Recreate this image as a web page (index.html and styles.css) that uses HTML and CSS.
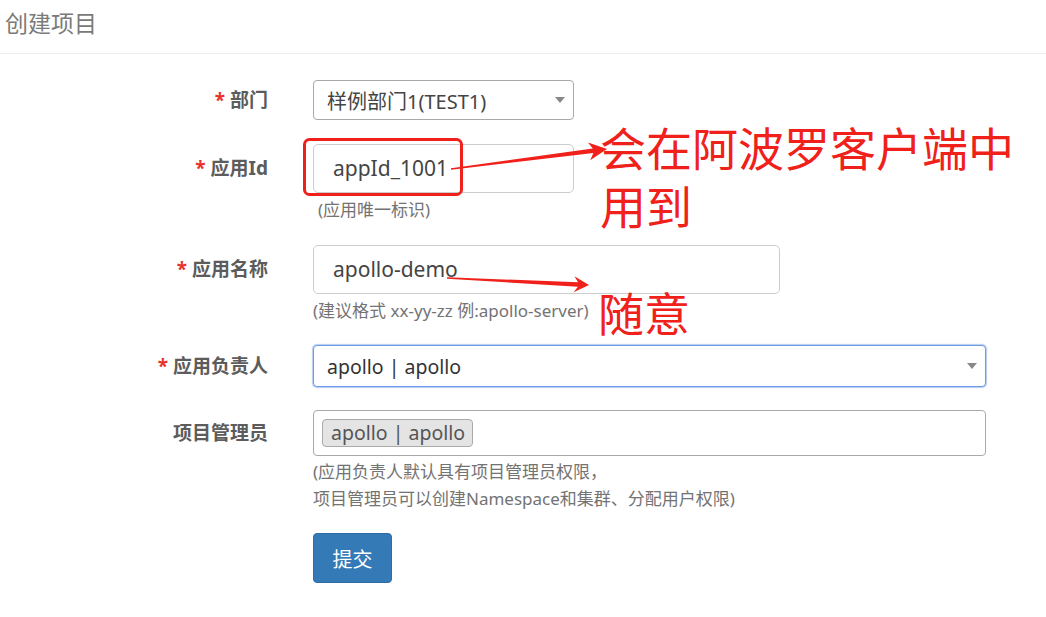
FILE: index.html
```html
<!DOCTYPE html>
<html lang="zh">
<head>
<meta charset="utf-8">
<title>创建项目</title>
<link rel="stylesheet" href="styles.css">
</head>
<body>
<div class="page">
  <div class="header"><h1 class="title">创建项目</h1></div>
  <form class="form">
    <div class="group g-dept">
      <label class="label"><span class="req">*</span>&nbsp;部门</label>
      <div class="ctrl">
        <div class="select w-short"><span class="sel-text">样例部门1(TEST1)</span><i class="caret"></i></div>
      </div>
    </div>
    <div class="group g-id">
      <label class="label"><span class="req">*</span>&nbsp;应用Id</label>
      <div class="ctrl">
        <div class="input w-short">appId_1001</div>
        <p class="help help-indent">(应用唯一标识)</p>
      </div>
    </div>
    <div class="group g-name">
      <label class="label"><span class="req">*</span>&nbsp;应用名称</label>
      <div class="ctrl">
        <div class="input w-mid">apollo-demo</div>
        <p class="help">(建议格式 xx-yy-zz 例:apollo-server)</p>
      </div>
    </div>
    <div class="group g-owner">
      <label class="label"><span class="req">*</span>&nbsp;应用负责人</label>
      <div class="ctrl">
        <div class="select select-focus w-long"><span class="sel-text owner-text">apollo | apollo</span><i class="caret"></i></div>
      </div>
    </div>
    <div class="group g-admin">
      <label class="label">项目管理员</label>
      <div class="ctrl">
        <div class="multi w-long"><span class="tag">apollo | apollo</span></div>
        <p class="help help-two">(应用负责人默认具有项目管理员权限，<br>项目管理员可以创建Namespace和集群、分配用户权限)</p>
      </div>
    </div>
    <div class="group g-submit">
      <div class="label-space"></div>
      <div class="ctrl">
        <button type="button" class="btn">提交</button>
      </div>
    </div>
  </form>

  <div class="note note-1">会在阿波罗客户端中用到</div>
  <div class="note note-2">随意</div>

  <svg class="overlay" width="1046" height="617" viewBox="0 0 1046 617" xmlns="http://www.w3.org/2000/svg">
    <rect x="304.5" y="139.5" width="157" height="55" rx="5" ry="5" fill="none" stroke="#f0201a" stroke-width="3"/>
    <polygon fill="#f0201a" points="450.9,168.2 592.8,148.6 588.0,142.4 607,149 590.2,160.2 593.4,153.0 451.1,169.8"/>
    <polygon fill="#f0201a" points="447.0,277.2 578.1,282.3 574.4,276.3 589,285 573.6,292.3 577.9,286.7 447.0,278.8"/>
  </svg>
</div>
</body>
</html>
```

FILE: styles.css
```css
* { box-sizing: border-box; }

html, body {
  margin: 0;
  padding: 0;
  background: #fff;
}

body {
  font-family: "Noto Sans", "Noto Sans CJK SC", sans-serif;
  color: #555;
}

.page {
  position: relative;
  width: 1046px;
  height: 617px;
  overflow: hidden;
}

.header {
  height: 54px;
  border-bottom: 1px solid #eeeeee;
}

.title {
  margin: 0;
  padding: 8px 0 0 5px;
  font-size: 23px;
  line-height: 30px;
  font-weight: 400;
  color: #7a7a7a;
}

.form {
  padding-top: 26px;
}

.group {
  display: flex;
  align-items: flex-start;
  --h: 40px;
}

.g-dept { --h: 40px; margin-bottom: 24px; }
.g-id { --h: 49px; margin-bottom: 24px; }
.g-name { --h: 49px; margin-bottom: 23px; }
.g-owner { --h: 42px; margin-bottom: 23px; }
.g-admin { --h: 46px; margin-bottom: 21px; }
.g-submit { --h: 50px; }

.label,
.label-space {
  width: 268px;
  flex: none;
  height: var(--h);
  line-height: var(--h);
  text-align: right;
  font-size: 19px;
  font-weight: 700;
  color: #5c5c5c;
}

.req {
  color: #e8322c;
}

.ctrl {
  margin-left: 45px;
}

.w-short { width: 261px; }
.w-mid { width: 467px; }
.w-long { width: 673px; }

.select {
  position: relative;
  height: var(--h);
  border: 1px solid #aaaaaa;
  border-radius: 4px;
  background: #fff;
  padding-left: 13px;
  display: flex;
  align-items: center;
}

.sel-text {
  font-size: 20px;
  color: #444;
}

.owner-text {
  font-size: 19.5px;
  color: #333;
}

.select-focus {
  border-color: #6f9ce6;
  box-shadow: 0 0 1px 1px rgba(120, 160, 230, 0.55);
}

.caret {
  position: absolute;
  right: 8px;
  top: 50%;
  margin-top: -3px;
  width: 0;
  height: 0;
  border-top: 6px solid #888;
  border-left: 5px solid transparent;
  border-right: 5px solid transparent;
}

.input {
  height: var(--h);
  border: 1px solid #cccccc;
  border-radius: 5px;
  padding-left: 19px;
  font-size: 21px;
  line-height: calc(var(--h) - 2px);
  color: #444;
  background: #fff;
}

.help {
  margin: 6px 0 0;
  font-size: 17px;
  line-height: 22px;
  color: #737373;
}

.help-indent {
  padding-left: 5px;
}

.help-two {
  margin-top: 2px;
  font-size: 17px;
  line-height: 27px;
}

.multi {
  height: var(--h);
  border: 1px solid #aaaaaa;
  border-radius: 4px;
  padding: 8px 0 0 8px;
  background: #fff;
}

.tag {
  display: inline-block;
  height: 28px;
  line-height: 26px;
  padding: 0 7px 0 8px;
  border: 1px solid #aaaaaa;
  border-radius: 4px;
  background: #e4e4e4;
  font-size: 19.5px;
  color: #555;
}

.btn {
  width: 79px;
  height: 50px;
  border: 1px solid #2e6da4;
  border-radius: 4px;
  background: #337ab7;
  color: #fff;
  font-family: "Noto Sans CJK SC", sans-serif;
  font-size: 20px;
  padding: 0;
}

.note {
  position: absolute;
  color: #f0201a;
  font-family: "Noto Sans CJK SC", sans-serif;
  font-size: 46px;
  line-height: 58px;
  font-weight: 400;
}

.note-1 {
  left: 600px;
  top: 117px;
  width: 430px;
}

.note-2 {
  left: 598px;
  top: 282px;
}

.overlay {
  position: absolute;
  left: 0;
  top: 0;
  pointer-events: none;
}
```
